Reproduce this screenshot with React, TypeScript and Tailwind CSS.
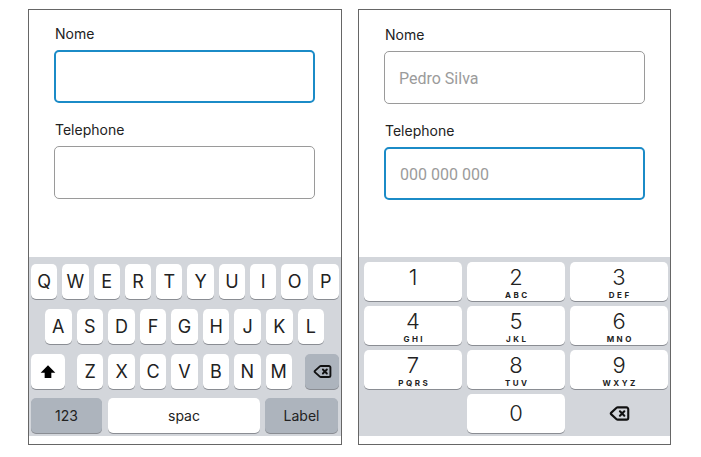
import React from "react";

const font = { fontFamily: "Inter, 'Noto Sans', sans-serif" };

function Backspace({ size = 20 }: { size?: number }) {
  return (
    <svg width={size} height={size} viewBox="0 0 24 24" fill="none" stroke="#111" strokeWidth={2.4} strokeLinecap="round" strokeLinejoin="round">
      <path d="M10 5a2 2 0 0 0-1.344.519l-6.328 5.74a1 1 0 0 0 0 1.481l6.328 5.741A2 2 0 0 0 10 19h10a2 2 0 0 0 2-2V7a2 2 0 0 0-2-2z" />
      <path d="m12.5 9.5 5 5" />
      <path d="m17.5 9.5-5 5" />
    </svg>
  );
}

function Shift() {
  return (
    <svg width="16" height="16" viewBox="0 0 24 24">
      <polygon points="12,2 23,13 17,13 17,21 7,21 7,13 1,13" fill="#000" />
    </svg>
  );
}

function Key({
  children,
  className = "",
  special,
  small,
}: {
  children: React.ReactNode;
  className?: string;
  special?: boolean;
  small?: boolean;
}) {
  return (
    <div
      className={
        "h-[35px] rounded-[5px] shadow-[0_1px_0_#8a8d93] flex items-center justify-center text-[#222] " +
        (special ? "bg-[#adb4bd] " : "bg-white ") +
        (small ? "text-[14px] " : "text-[18px] ") +
        className
      }
    >
      {children}
    </div>
  );
}

function Field({ label, focused, placeholder, mt }: { label: string; focused?: boolean; placeholder?: string; mt?: string }) {
  return (
    <div className={"flex flex-col " + (mt ?? "")}>
      <div className="text-[14px] leading-[20px] text-[#222] pl-[1px] mb-[6px]">{label}</div>
      <div
        className={
          "w-[261px] h-[53px] rounded-[5px] flex items-center pl-[14px] pt-[3px] " +
          (focused ? "border-2 border-[#1b8bc7]" : "border border-[#9a9a9a]")
        }
      >
        {placeholder && (
          <span className="text-[16px] text-[#9b9b9b]" style={{ fontFamily: "Roboto, sans-serif" }}>
            {placeholder}
          </span>
        )}
      </div>
    </div>
  );
}

function LetterKeyboard() {
  const r1 = ["Q", "W", "E", "R", "T", "Y", "U", "I", "O", "P"];
  const r2 = ["A", "S", "D", "F", "G", "H", "J", "K", "L"];
  const r3 = ["Z", "X", "C", "V", "B", "N", "M"];
  return (
    <div className="bg-[#d3d6db] pt-[7px] pb-[3px] flex flex-col gap-[10px]">
      <div className="flex gap-[5px] px-[2px]">
        {r1.map((k) => (
          <Key key={k} className="flex-1">{k}</Key>
        ))}
      </div>
      <div className="flex gap-[5px] pl-[16px] pr-[17px]">
        {r2.map((k) => (
          <Key key={k} className="flex-1">{k}</Key>
        ))}
      </div>
      <div className="flex px-[2px]">
        <Key className="w-[34px]"><Shift /></Key>
        <div className="flex-1 flex gap-[5px] ml-[12px] mr-[13px]">
          {r3.map((k) => (
            <Key key={k} className="flex-1">{k}</Key>
          ))}
        </div>
        <Key className="w-[34px]" special><Backspace size={19} /></Key>
      </div>
      <div className="flex px-[2px] mt-[-1px]">
        <Key className="w-[71px]" special small>123</Key>
        <Key className="w-[152px] ml-[6px]" small>spac</Key>
        <Key className="w-[73px] ml-[5px]" special small>Label</Key>
      </div>
    </div>
  );
}

function NumKey({ d, sub }: { d: string; sub?: string }) {
  return (
    <div className="flex-1 h-[39px] rounded-[5px] bg-white shadow-[0_1px_0_#8a8d93] flex flex-col items-center pt-[4px]">
      <div className="text-[22px] leading-[22px] text-[#222] font-light">{d}</div>
      <div className="mt-[3px] text-[8px] leading-[8px] font-bold tracking-[2.5px] text-[#222] pl-[2.5px]">{sub ?? "\u00a0"}</div>
    </div>
  );
}

function NumberKeyboard() {
  const rows: [string, string?][][] = [
    [["1"], ["2", "ABC"], ["3", "DEF"]],
    [["4", "GHI"], ["5", "JKL"], ["6", "MNO"]],
    [["7", "PQRS"], ["8", "TUV"], ["9", "WXYZ"]],
  ];
  return (
    <div className="bg-[#d3d6db] pt-[5px] pb-[3px] pl-[5px] pr-[2px] flex flex-col gap-[5px]">
      {rows.map((row, i) => (
        <div key={i} className="flex gap-[5px]">
          {row.map(([d, s]) => (
            <NumKey key={d} d={d} sub={s} />
          ))}
        </div>
      ))}
      <div className="flex gap-[5px]">
        <div className="flex-1 h-[39px]" />
        <div className="flex-1 h-[39px] rounded-[5px] bg-white shadow-[0_1px_0_#8a8d93] flex items-center justify-center text-[22px] font-light text-[#222]">
          0
        </div>
        <div className="flex-1 h-[39px] flex items-center justify-center">
          <Backspace size={21} />
        </div>
      </div>
    </div>
  );
}

export default function App() {
  return (
    <div className="w-[701px] h-[457px] bg-white flex pl-[28px] pt-[9px] gap-[16px]" style={font}>
      <div className="w-[314px] h-[436px] border border-[#666] flex flex-col">
        <div className="px-[25px] pt-[14px] flex flex-col">
          <Field label="Nome" focused />
          <Field label="Telephone" mt="mt-[17px]" />
        </div>
        <div className="flex-1" />
        <LetterKeyboard />
        <div className="h-[8px]" />
      </div>
      <div className="w-[313px] h-[436px] border border-[#666] flex flex-col">
        <div className="px-[25px] pt-[15px] flex flex-col">
          <Field label="Nome" placeholder="Pedro Silva" />
          <Field label="Telephone" focused placeholder="000 000 000" mt="mt-[17px]" />
        </div>
        <div className="flex-1" />
        <NumberKeyboard />
        <div className="h-[8px]" />
      </div>
    </div>
  );
}
